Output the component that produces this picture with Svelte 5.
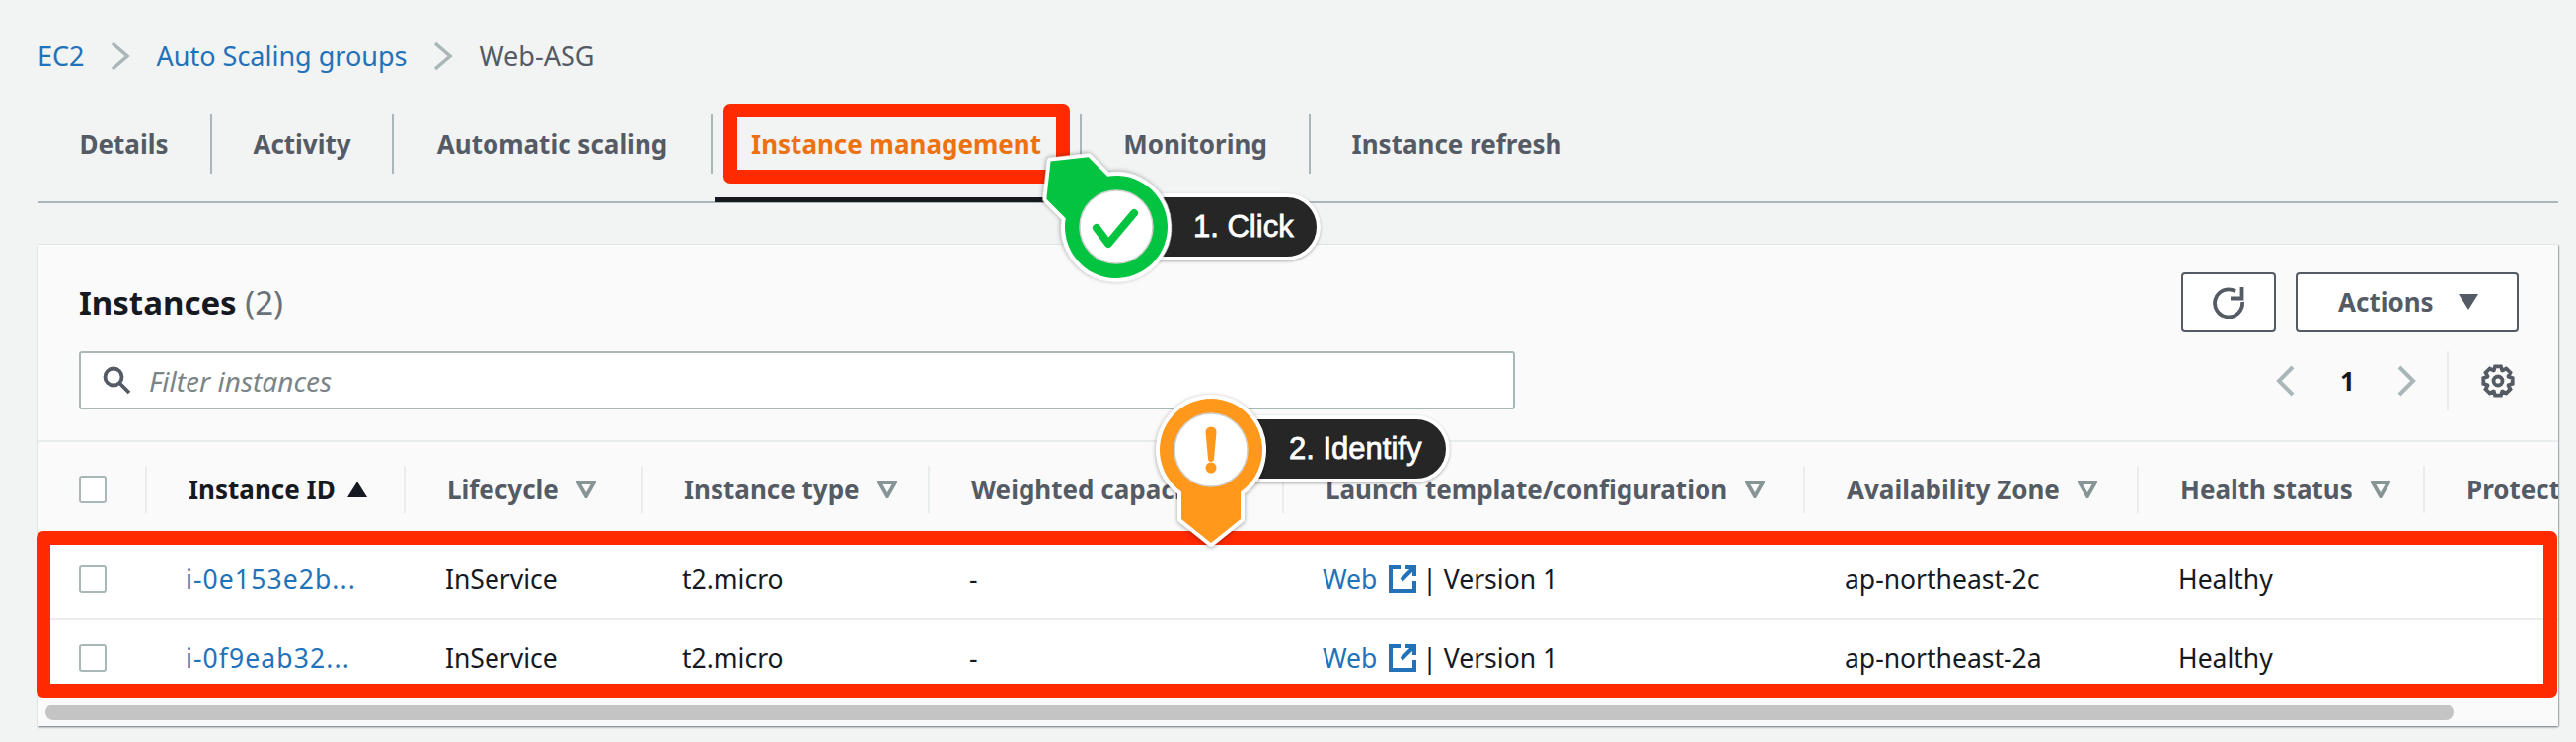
<script>
  const tabs = ['Details', 'Activity', 'Automatic scaling', 'Instance management', 'Monitoring', 'Instance refresh'];
  const heads = ['Lifecycle', 'Instance type', 'Weighted capacity', 'Launch template/configuration', 'Availability Zone', 'Health status'];
  const rows = [
    { id: 'i-0e153e2b...', zone: 'ap-northeast-2c' },
    { id: 'i-0f9eab32...', zone: 'ap-northeast-2a' }
  ];
  function gearPath() {
    const n = 8, R = 15, r = 11.5, pts = [];
    for (let i = 0; i < n; i++) {
      const a = (i / n) * Math.PI * 2 - Math.PI / 2;
      const s = Math.PI / n;
      [[r, -s * 0.95], [R, -s * 0.5], [R, s * 0.5], [r, s * 0.95]].forEach(([q, d]) => {
        pts.push((q * Math.cos(a + d)).toFixed(2) + ' ' + (q * Math.sin(a + d)).toFixed(2));
      });
    }
    return 'M' + pts.join('L') + 'Z';
  }
  const gear = gearPath();
  const pinPath = 'M-30 42.5A52 52 0 1 1 30 42.5L30 70L0 94L-30 70Z';
</script>

{#snippet filterIcon()}
  <svg class="tri" viewBox="0 0 20 18"><path d="M2 2H18L10 16Z" /></svg>
{/snippet}

{#snippet chev()}
  <svg class="crumb-chev" viewBox="0 0 20 30"><path d="M2 2L17 15L2 28" /></svg>
{/snippet}

<div class="page">
  <nav class="crumbs">
    <a href="#a">EC2</a>
    {@render chev()}
    <a href="#b">Auto Scaling groups</a>
    {@render chev()}
    <span>Web-ASG</span>
  </nav>

  <div class="tabs">
    {#each tabs as t, i}
      <div class="tab" class:active={i === 3} class:last={i === 5}>{t}</div>
    {/each}
  </div>

  <section class="card">
    <header class="card-head">
      <div class="top">
        <h2>Instances <span>(2)</span></h2>
        <div class="btns">
          <button class="btn icon" aria-label="Refresh">
            <svg width="34" height="34" viewBox="0 0 34 34"><path class="ln" d="M24 6.2A14 14 0 1 0 31 17" /><path class="ln" d="M19 13.500H30.500V2" /></svg>
          </button>
          <button class="btn act">Actions <svg width="20" height="16" viewBox="0 0 20 16"><path class="fill" d="M0 0H20L10 16Z" /></svg></button>
        </div>
      </div>
      <div class="bottom">
        <div class="filter">
          <svg width="30" height="30" viewBox="0 0 30 30"><circle class="ln" cx="11" cy="11" r="8.500" /><path class="ln" d="M17 17L27 27" /></svg>
          <span>Filter instances</span>
        </div>
        <div class="pager">
          <svg class="pchev" viewBox="0 0 20 32"><path d="M17 2L3 16L17 30" /></svg>
          <b>1</b>
          <svg class="pchev" viewBox="0 0 20 32"><path d="M3 2L17 16L3 30" /></svg>
          <i class="div"></i>
          <svg width="36" height="36" viewBox="-18 -18 36 36"><path class="ln" d={gear} /><circle class="ln" r="4.500" /></svg>
        </div>
      </div>
    </header>

    <div class="grid head">
      <div class="th"><i class="cb"></i></div>
      <div class="th sorted">Instance ID <svg class="sort" viewBox="0 0 20 16"><path d="M10 0L20 16H0Z" /></svg></div>
      {#each heads as h}
        <div class="th">{h} {@render filterIcon()}</div>
      {/each}
      <div class="th plain">Protection</div>
    </div>

    {#each rows as r, i}
      <div class="grid row" class:sep={i > 0}>
        <div class="td"><i class="cb"></i></div>
        <div class="td"><a class="iid" href="#i">{r.id}</a></div>
        <div class="td">InService</div>
        <div class="td">t2.micro</div>
        <div class="td">-</div>
        <div class="td"><a class="tpl" href="#w">Web</a><svg class="ext" viewBox="0 0 28 28"><path d="M12 2H2V26H26V16" /><path d="M17 2H26V11" /><path d="M26 2L13 15" /></svg><span>| Version 1</span></div>
        <div class="td">{r.zone}</div>
        <div class="td">Healthy</div>
        <div class="td"></div>
      </div>
    {/each}

    <div class="track"><div class="thumb"></div></div>
  </section>

  <div class="box box-tab"></div>
  <div class="box box-rows"></div>

  <div class="pill pill-1">1. Click</div>
  <svg class="pin pin-1" viewBox="-110 -110 220 220">
    <g transform="rotate(135)">
      <path class="pin-out" d={pinPath} />
      <path class="green" d={pinPath} />
    </g>
    <circle class="hole" r="37" />
    <path class="check" d="M-20 1L-8 17L18 -14" />
  </svg>

  <div class="pill pill-2">2. Identify</div>
  <svg class="pin pin-2" viewBox="-110 -110 220 220">
    <path class="pin-out" d={pinPath} />
    <path class="orange" d={pinPath} />
    <circle class="hole" r="37" />
    <path class="bang" d="M-5.500 -18A5.500 5.500 0 0 1 5.500 -18L3 9A3 3 0 0 1 -3 9Z" />
    <circle class="bang" cy="18" r="5.500" />
  </svg>
</div>

<style>
  :global(body) { margin: 0; background: #f2f3f3; }
  .page {
    position: relative;
    width: 2610px;
    height: 752px;
    overflow: hidden;
    box-sizing: border-box;
    padding: 37px 18px 0 38px;
    background: #f2f3f3;
    font-family: "Noto Sans", sans-serif;
    font-size: 26px;
    color: #16191f;
  }
  a { color: #2272b9; text-decoration: none; }
  .crumbs { display: flex; align-items: center; height: 38px; color: #545b64; font-size: 27px; }
  .crumb-chev { width: 20px; height: 30px; margin: 2px 27px 0 26px; fill: none; stroke: #aab7b8; stroke-width: 3.500; }

  .tabs {
    display: grid;
    grid-template-columns: 177px 184px 323px 374px 232px 296px 1fr;
    margin-top: 41px;
    padding-bottom: 28px;
    border-bottom: 2px solid #aab7b8;
  }
  .tab {
    position: relative;
    height: 60px;
    line-height: 60px;
    text-align: center;
    font-weight: 700;
    color: #545b64;
    border-right: 2px solid #aab7b8;
  }
  .tab.last { border-right: 0; }
  .tab.active { color: #ec7211; }
  .tab.active::after {
    content: "";
    position: absolute;
    left: 2px;
    right: 4px;
    top: 84px;
    height: 5px;
    background: #16191f;
  }

  .card {
    margin: 42px 0 0 1px;
    height: 488px;
    overflow: hidden;
    background: #fafafa;
    box-shadow: 0 1px 2px #687078, 0 -1px 0 #eaeded, 1px 0 1px #c6cccc, -1px 0 1px #c6cccc;
  }
  .card-head { padding: 28px 40px 30px 41px; border-bottom: 2px solid #eaeded; }
  .top, .bottom { display: flex; justify-content: space-between; align-items: center; }
  .bottom { margin-top: 20px; align-items: flex-start; }
  h2 { margin: 0; font-size: 33px; font-weight: 700; color: #16191f; }
  h2 span { font-weight: 400; color: #687078; }
  .btns { display: flex; gap: 20px; }
  .btn {
    display: flex;
    align-items: center;
    justify-content: center;
    box-sizing: border-box;
    height: 60px;
    padding: 0;
    background: #fff;
    border: 2px solid #545b64;
    border-radius: 4px;
    font: 700 26px "Noto Sans", sans-serif;
    color: #545b64;
  }
  .btn.icon { width: 96px; }
  .btn.act { width: 226px; gap: 25px; justify-content: flex-start; padding-left: 41px; }
  .ln { fill: none; stroke: #545b64; stroke-width: 3.800; }
  .fill { fill: #545b64; }
  .filter {
    display: flex;
    align-items: center;
    gap: 17px;
    box-sizing: border-box;
    width: 1455px;
    height: 59px;
    padding-left: 22px;
    background: #fff;
    border: 2px solid #aab7b8;
    border-radius: 3px;
    font-style: italic;
    font-size: 28px;
    color: #7b8587;
  }
  .pager { display: flex; align-items: center; height: 60px; padding-right: 3px; }
  .pchev { width: 20px; height: 32px; fill: none; stroke: #aab7b8; stroke-width: 4; }
  .pager b { box-sizing: border-box; width: 102px; padding-left: 3px; text-align: center; color: #16191f; }
  .pager .div { width: 2px; height: 60px; margin: 0 32px 0 31px; background: #eaeded; }

  .grid { display: grid; grid-template-columns: 110px 262px 240px 291px 359px 528px 338px 290px 135px; }
  .head { height: 99px; padding-top: 24px; box-sizing: border-box; }
  .th {
    display: flex;
    align-items: center;
    gap: 18px;
    box-sizing: border-box;
    height: 48px;
    padding-left: 42px;
    font-weight: 700;
    color: #545b64;
    white-space: nowrap;
    overflow: hidden;
    border-right: 2px solid #eaeded;
  }
  .th.sorted { color: #16191f; gap: 12px; }
  .th.plain { border-right: 0; }
  .tri { flex: none; width: 20px; height: 18px; fill: none; stroke: #879596; stroke-width: 3.800; }
  .sort { flex: none; width: 20px; height: 16px; fill: #16191f; }
  .cb {
    display: block;
    box-sizing: border-box;
    width: 28px;
    height: 28px;
    margin-left: -1px;
    background: #fff;
    border: 2px solid #aab7b8;
    border-radius: 3px;
  }
  .row { height: 79px; background: #fff; font-size: 26.5px; }
  .row.sep { height: 81px; box-shadow: inset 0 2px 0 #eaeded; }
  .td { display: flex; align-items: center; padding-left: 40px; white-space: nowrap; }
  .td:first-child { padding-left: 42px; }
  .iid { margin-left: -1px; letter-spacing: 1.1px; }
  .tpl { margin-left: -1px; }
  .ext { width: 28px; height: 28px; margin: 0 6px 0 12px; fill: none; stroke: #2272b9; stroke-width: 4; }
  .track { padding: 7px 0 0 7px; }
  .thumb { width: 2440px; height: 16px; border-radius: 8px; background: #c4c4c4; }

  .box {
    position: absolute;
    box-sizing: border-box;
    border: 14px solid #ff2a00;
    border-radius: 7px;
  }
  .box-tab { left: 733px; top: 105px; width: 351px; height: 81px; }
  .box-rows { left: 37px; top: 538px; width: 2554px; height: 169px; }

  .pill {
    position: absolute;
    box-sizing: content-box;
    height: 60px;
    background: #262626;
    color: #fff;
    border: 4px solid #fff;
    border-radius: 34px;
    font: 500 31px/60px "Liberation Sans", sans-serif;
    -webkit-text-stroke: 0.8px #fff;
    box-shadow: 0 1px 3px rgba(0,0,0,.3);
    white-space: nowrap;
  }
  .pill-1 { left: 1130px; top: 196px; width: 125px; padding-left: 75px; }
  .pill-2 { left: 1226px; top: 421px; width: 159px; padding-left: 76px; }
  .pin { position: absolute; width: 220px; height: 220px; }
  .pin-1 { left: 1021px; top: 120px; }
  .pin-2 { left: 1117px; top: 346px; }
  .pin-out { fill: #fff; stroke: #fff; stroke-width: 8; stroke-linejoin: round; filter: drop-shadow(0 1px 2px rgba(0,0,0,.35)); }
  .green { fill: #02c440; }
  .orange { fill: #ff981b; }
  .hole { fill: #fff; stroke: #d0d0d0; stroke-width: 1.500; }
  .check { fill: none; stroke: #02c440; stroke-width: 8; stroke-linecap: round; stroke-linejoin: round; }
  .bang { fill: #ff981b; }
</style>
